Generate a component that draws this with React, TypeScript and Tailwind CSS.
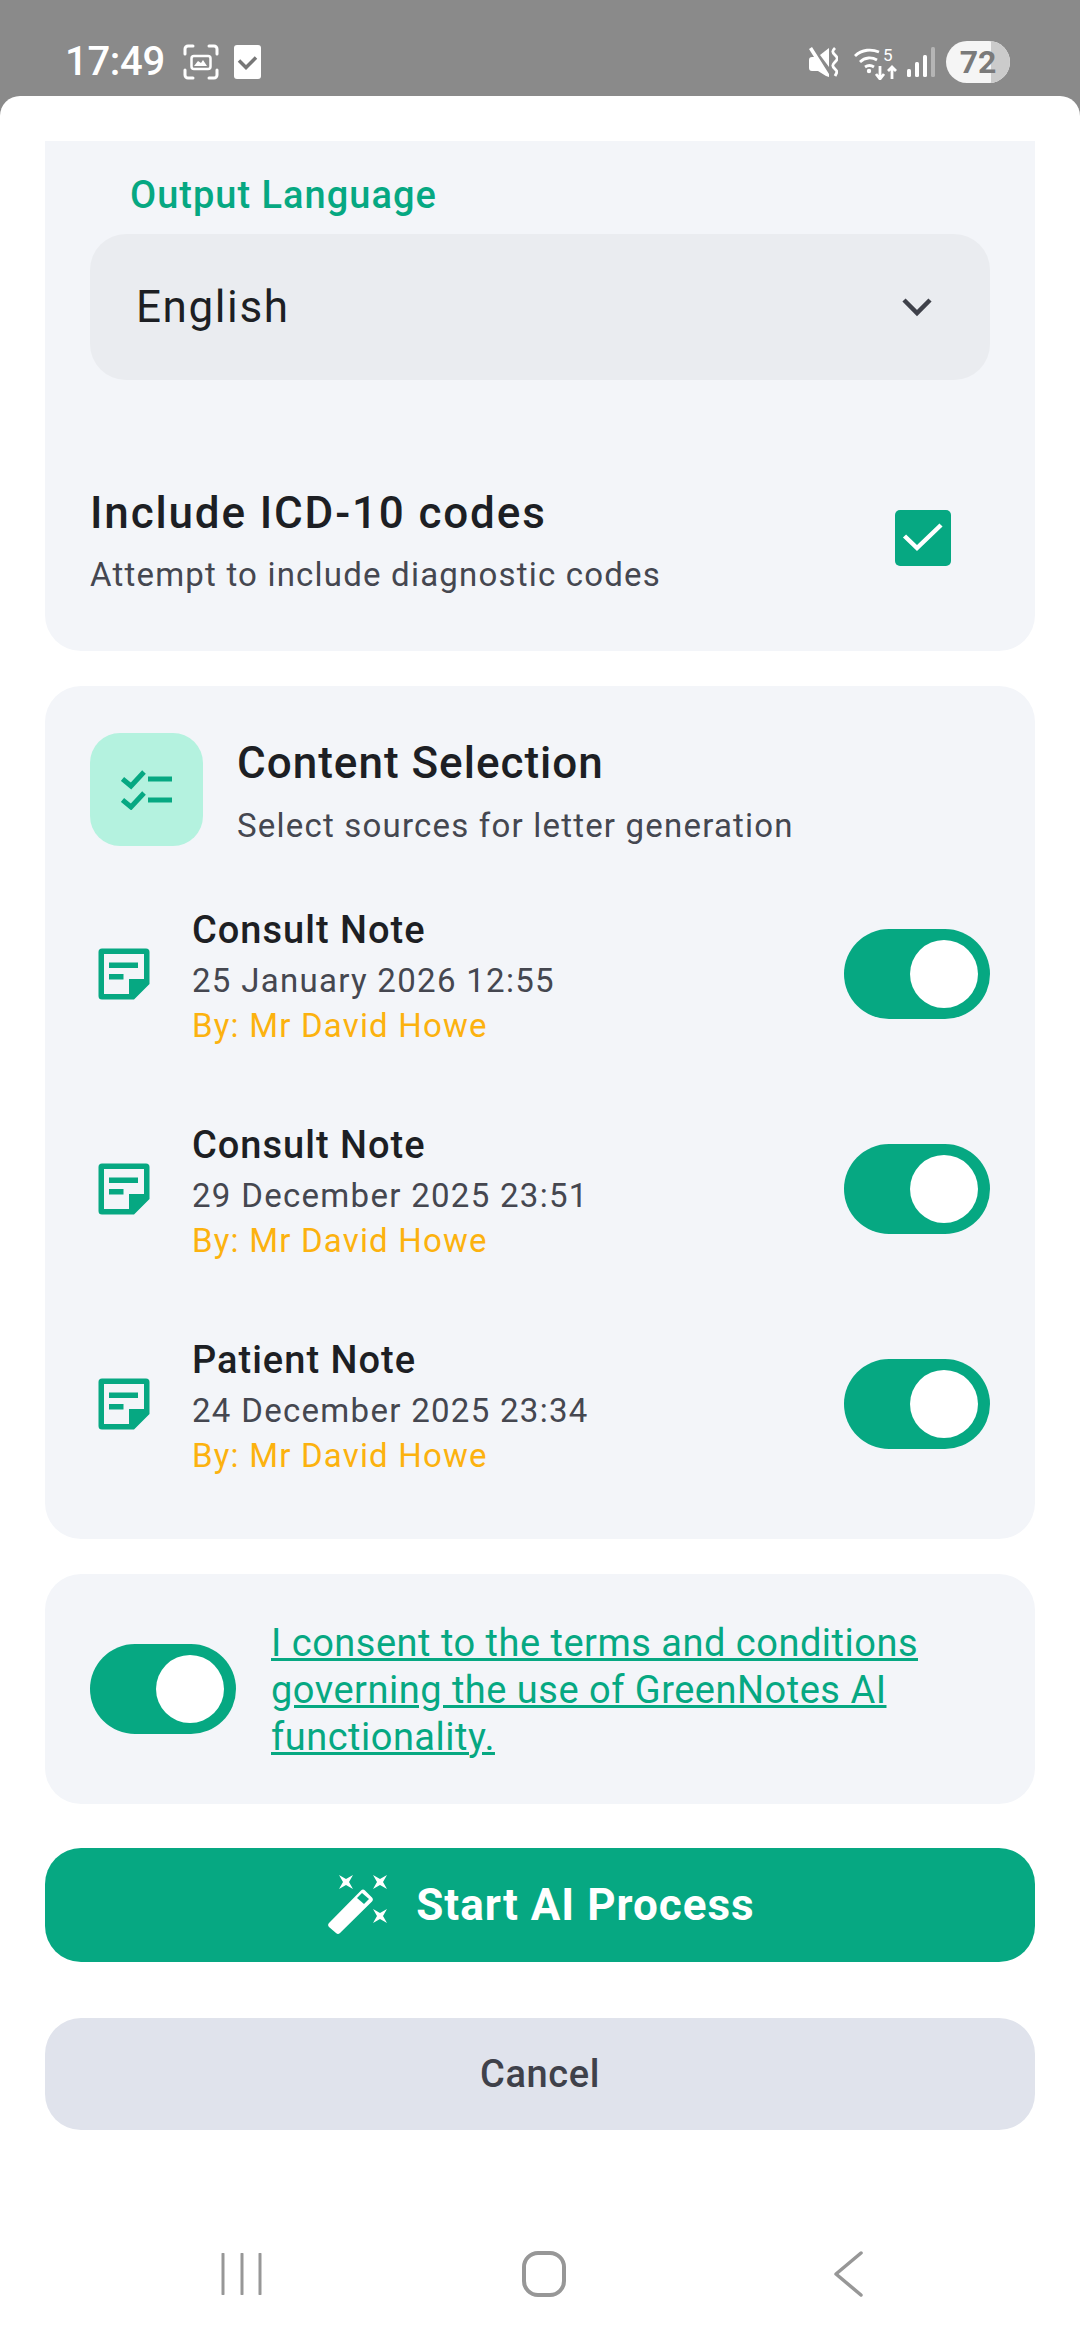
import React from 'react';

const ROBOTO = 'font-["Roboto",sans-serif]';

const Toggle: React.FC = () => (
  <div className="w-[146px] h-[90px] rounded-full bg-[#06a882] flex items-center justify-end pr-[12px] shrink-0">
    <div className="w-[68px] h-[68px] rounded-full bg-white" />
  </div>
);

const NoteIcon: React.FC = () => (
  <svg width="52" height="52" viewBox="0 0 52 52" className="shrink-0">
    <path
      d="M4 0.5H48a3.5 3.5 0 0 1 3.5 3.5V36L36 51.5H4A3.5 3.5 0 0 1 0.5 48V4A3.5 3.5 0 0 1 4 0.5Z"
      fill="#06a882"
    />
    <path d="M6 6H46V31H31V46H6Z" fill="#f3f5f9" />
    <rect x="11" y="14.500" width="29" height="5.500" fill="#06a882" />
    <rect x="11" y="26" width="14.500" height="5.500" fill="#06a882" />
  </svg>
);

interface NoteRowProps {
  title: string;
  date: string;
}

const NoteRow: React.FC<NoteRowProps> = ({ title, date }) => (
  <div className="flex items-center h-[144px]">
    <div className="ml-[8px] mr-[42px]">
      <NoteIcon />
    </div>
    <div className="flex-1 mt-[8px]">
      <div className="text-[38px] leading-[44px] font-medium text-[#1d1f24] tracking-[1px]">{title}</div>
      <div className="mt-[7px] text-[33px] leading-[44px] text-[#454750] tracking-[1.3px]">{date}</div>
      <div className="mt-[1px] text-[33px] leading-[44px] text-[#fcb20f] tracking-[1.2px]">By: Mr David Howe</div>
    </div>
    <Toggle />
  </div>
);

const StatusBar: React.FC = () => (
  <div className="h-[96px] bg-[#8a8a8a] flex items-center justify-between pl-[65px] pr-[70px] pt-[28px]">
    <div className="flex items-center">
      <span className="text-[40px] leading-[40px] font-medium text-white tracking-[-0.3px]">17:49</span>
      <svg width="36" height="36" viewBox="0 0 36 36" fill="none" stroke="white" strokeWidth="3" strokeLinecap="round" className="ml-[18px]">
        <path d="M10 2H5a3 3 0 0 0-3 3v5M26 2h5a3 3 0 0 1 3 3v5M10 34H5a3 3 0 0 1-3-3v-5M26 34h5a3 3 0 0 0 3-3v-5" />
        <rect x="8.500" y="12" width="19" height="13" rx="2.500" strokeWidth="2.500" />
        <path d="M11 22l4-5 3 2 2-3 4 6z" fill="white" stroke="none" />
      </svg>
      <svg width="27" height="34" viewBox="0 0 27 34" className="ml-[15px]">
        <rect width="27" height="34" rx="3" fill="white" />
        <path d="M5 15.500l7 7 10-10" fill="none" stroke="#777" strokeWidth="3.500" />
      </svg>
    </div>
    <div className="flex items-center">
      <svg width="30" height="30" viewBox="0 0 30 30" fill="white">
        <path d="M1 2L4 0L21 27V30L18 29L10 24H4a3 3 0 0 1-3-3V13a3 3 0 0 1 3-3H6Z" />
        <path d="M12 8L21 1V20Z" />
        <path d="M27 1c-3 3-3 4 0 7s3 4 0 7-3 4 0 7 2 3 0 7" fill="none" stroke="white" strokeWidth="2.800" />
      </svg>
      <svg width="44" height="36" viewBox="0 -4 44 36" fill="none" stroke="white" strokeWidth="2.800" className="ml-[16px]">
        <path d="M1 8c7-7 17-7 24-4M6 14c5-5 12-5 17-2M11 19c3-2 6-2 9 0" />
        <circle cx="15" cy="23" r="2.200" fill="white" stroke="none" />
        <path d="M26 18v13M22 26l4 5 4-5M38 31V19M34 23l4-4 4 4" />
        <text x="29" y="13" fontSize="17" fill="white" stroke="none" fontFamily="Roboto, sans-serif">5</text>
      </svg>
      <svg width="28" height="30" viewBox="0 0 28 30" className="ml-[9px]">
        <rect x="0" y="22" width="4" height="8" rx="1.500" fill="white" />
        <rect x="8" y="15" width="4" height="15" rx="1.500" fill="white" />
        <rect x="16" y="8" width="4" height="22" rx="1.500" fill="white" />
        <rect x="24" y="0" width="4" height="30" rx="1.500" fill="#b5b5b5" />
      </svg>
      <div className="relative ml-[11px] w-[64px] h-[42px] rounded-full overflow-hidden bg-[#f5f5f5] flex items-center justify-center">
        <div className="absolute right-0 top-0 bottom-0 w-[19px] bg-[#cbcbcb]" />
        <span className="relative text-[32px] font-bold leading-none text-[#7a7a7a]">72</span>
      </div>
    </div>
  </div>
);

const App: React.FC = () => {
  return (
    <div className={`${ROBOTO} w-[1080px] h-[2340px] bg-[#8a8a8a] overflow-hidden flex flex-col`}>
      <StatusBar />
      <div className="flex-1 bg-white rounded-t-[20px] flex flex-col px-[45px] pt-[45px]">
        {/* Language and ICD codes */}
        <div className="bg-[#f3f5f9] rounded-b-[36px] h-[510px] px-[45px] shrink-0">
          <div className="pl-[40px] pt-[31px] text-[38px] leading-[46px] font-medium text-[#06a882] tracking-[1px]">
            Output Language
          </div>
          <div className="mt-[16px] h-[146px] rounded-[36px] bg-[#eaecf0] flex items-center justify-between pl-[46px] pr-[57px]">
            <span className="text-[44px] text-[#1d1f24] tracking-[1.6px]">English</span>
            <svg width="32" height="20" viewBox="0 0 32 20" fill="none" stroke="#3f414a" strokeWidth="4.500">
              <path d="M3 3l13 13 13-13" />
            </svg>
          </div>
          <div className="mt-[111px] flex items-center justify-between">
            <div>
              <div className="text-[44px] leading-[44px] font-medium text-[#1d1f24] tracking-[1.85px]">
                Include ICD-10 codes
              </div>
              <div className="mt-[20px] text-[33px] leading-[40px] text-[#454750] tracking-[1.2px]">
                Attempt to include diagnostic codes
              </div>
            </div>
            <div className="w-[56px] h-[56px] mr-[39px] mb-[10px] rounded-[5px] bg-[#06a882] flex items-center justify-center">
              <svg width="42" height="34" viewBox="0 0 42 34" fill="none" stroke="white" strokeWidth="4.500">
                <path d="M2.500 15l12.500 12L39 4" />
              </svg>
            </div>
          </div>
        </div>

        {/* Content selection */}
        <div className="mt-[35px] bg-[#f3f5f9] rounded-[36px] h-[853px] px-[45px] pt-[47px] shrink-0">
          <div className="flex items-center">
            <div className="w-[113px] h-[113px] rounded-[30px] bg-[#b4f2df] flex items-center justify-center">
              <svg width="52" height="40" viewBox="0 0 52 40" fill="none" stroke="#06a882" strokeWidth="5">
                <path d="M1.500 9l8.500 7 13-14M1.500 30l8.500 7 13-14" />
                <path d="M27 9h24M27 30h24" />
              </svg>
            </div>
            <div className="ml-[34px] mt-[8px]">
              <div className="text-[44px] leading-[44px] font-medium text-[#1d1f24] tracking-[1px]">
                Content Selection
              </div>
              <div className="mt-[21px] text-[33px] leading-[40px] text-[#454750] tracking-[1.2px]">
                Select sources for letter generation
              </div>
            </div>
          </div>
          <div className="mt-[56px]">
            <NoteRow title="Consult Note" date="25 January 2026 12:55" />
            <div className="mt-[71px]">
              <NoteRow title="Consult Note" date="29 December 2025 23:51" />
            </div>
            <div className="mt-[71px]">
              <NoteRow title="Patient Note" date="24 December 2025 23:34" />
            </div>
          </div>
        </div>

        {/* Consent */}
        <div className="mt-[35px] bg-[#f3f5f9] rounded-[36px] h-[230px] px-[45px] flex items-center shrink-0">
          <Toggle />
          <div className="ml-[35px] mt-[2px] text-[38px] leading-[47px] text-[#06a882] underline tracking-[0.5px] w-[680px]">
            I consent to the terms and conditions governing the use of GreenNotes AI functionality.
          </div>
        </div>

        <button className="mt-[44px] h-[114px] rounded-[36px] bg-[#06a882] flex items-center justify-center shrink-0">
          <svg width="60" height="60" viewBox="0 0 60 60" fill="white" className="mr-[28px] ml-[3px]">
            <path d="M33 15.500a3 3 0 0 1 4 0l7 7a3 3 0 0 1 0 4L12 58a3 3 0 0 1-4 0l-7-6a3 3 0 0 1 0-4Z" />
            <path d="M34 18l7 6-5 5-7-6Z" fill="#06a882" />
            <path d="M11 0l7 4 7-4-4 7 4 7-7-4-7 4 4-7Z" />
            <path d="M45 0l7 4 7-4-4 7 4 7-7-4-7 4 4-7Z" />
            <path d="M45 34l7 4 7-4-4 7 4 7-7-4-7 4 4-7Z" />
          </svg>
          <span className="text-[44px] font-bold text-white tracking-[1px]">Start AI Process</span>
        </button>

        <button className="mt-[56px] h-[112px] rounded-[36px] bg-[#e0e3ec] flex items-center justify-center shrink-0">
          <span className="text-[38px] font-medium text-[#3f414a] tracking-[0.6px]">Cancel</span>
        </button>

        {/* System navigation */}
        <div className="mt-[121px] flex items-center pl-[176px]">
          <svg width="42" height="42" viewBox="0 0 42 42" stroke="#979797" strokeWidth="3" strokeLinecap="round">
            <path d="M2 1v40M21 1v40M39 1v40" />
          </svg>
          <svg width="44" height="46" viewBox="0 0 44 46" fill="none" stroke="#979797" strokeWidth="4" className="ml-[259px]">
            <rect x="2" y="2" width="40" height="42" rx="14" />
          </svg>
          <svg width="32" height="46" viewBox="0 0 32 46" fill="none" stroke="#979797" strokeWidth="3.500" strokeLinecap="round" strokeLinejoin="round" className="ml-[267px]">
            <path d="M28 2L3 23l25 21" />
          </svg>
        </div>
      </div>
    </div>
  );
};

export default App;
